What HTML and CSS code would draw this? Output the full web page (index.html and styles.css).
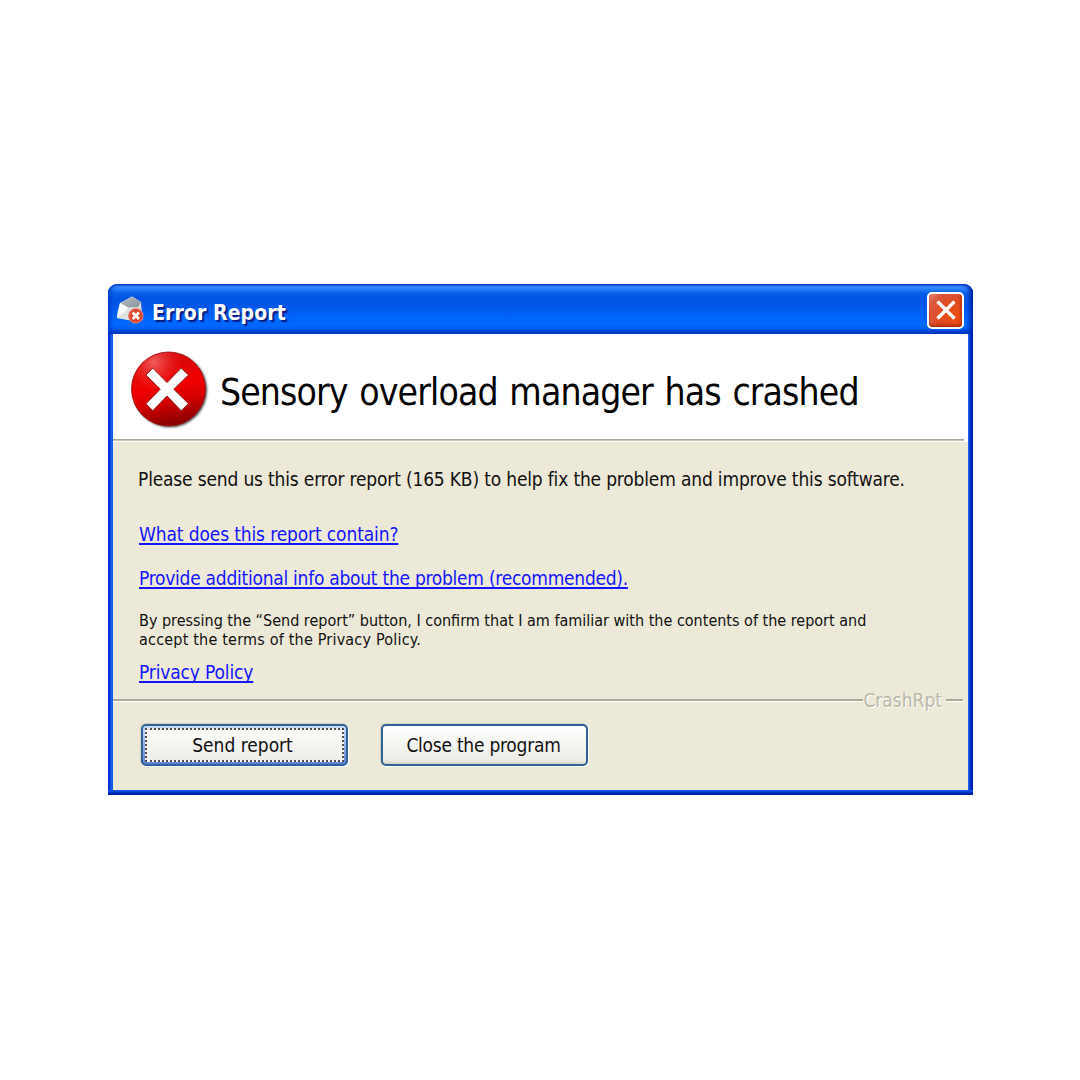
FILE: index.html
```html
<!DOCTYPE html>
<html lang="en">
<head>
<meta charset="utf-8">
<title>Error Report</title>
<link rel="stylesheet" href="styles.css">
</head>
<body>
<main class="window">
  <header class="titlebar">
    <svg class="app-icon" width="30" height="30" viewBox="0 0 30 30">
      <defs>
        <linearGradient id="paper" x1="0" y1="0" x2="0.4" y2="1"><stop offset="0" stop-color="#fff"/><stop offset="1" stop-color="#c9cdd0"/></linearGradient>
        <linearGradient id="flap" x1="0" y1="0" x2="1" y2="1"><stop offset="0" stop-color="#b9c3c8"/><stop offset="1" stop-color="#87939a"/></linearGradient>
      </defs>
      <path d="M4 9 16 2.500 25 8 26 21 18 27 1 24 1.500 18Z" fill="url(#paper)"/>
      <path d="M4 9 16 2.500 25 8 22 13 12 13.500Z" fill="url(#flap)"/>
      <path d="M4 9 1 24 10 17 12 13.500Z" fill="#f8fafa"/>
      <path d="M1 24 10 17 18 27Z" fill="#dfe2e3"/>
      <circle cx="19.800" cy="21.800" r="7.200" fill="#dc452c" stroke="#e98674" stroke-width="1"/>
      <path d="M16.600 18.600 23 25M23 18.600 16.600 25" stroke="#fff" stroke-width="2.800"/>
    </svg>
    <h1 class="caption">Error Report</h1>
    <button class="close" aria-label="Close">
      <svg width="20" height="20" viewBox="0 0 20 20"><path d="M1.500 1.500 18.500 18.500M18.500 1.500 1.500 18.500" stroke="#fff" stroke-width="3.400"/></svg>
    </button>
  </header>
  <section class="banner">
    <svg class="error-icon" width="80" height="80" viewBox="0 0 80 80">
      <defs>
        <linearGradient id="red" x1="0.400" y1="0" x2="0.600" y2="1"><stop offset="0" stop-color="#d00a0a"/><stop offset="0.450" stop-color="#f00000"/><stop offset="0.650" stop-color="#d80000"/><stop offset="1" stop-color="#800000"/></linearGradient>
        <radialGradient id="shine" cx="0.300" cy="0.140" r="0.400"><stop offset="0" stop-color="#ff8b8b" stop-opacity="0.650"/><stop offset="1" stop-color="#ff3030" stop-opacity="0"/></radialGradient>
        <filter id="soft" x="-10%" y="-10%" width="120%" height="120%"><feGaussianBlur stdDeviation="0.900"/></filter>
      </defs>
      <circle cx="40" cy="40.200" r="37" fill="#222" opacity="0.850" filter="url(#soft)"/>
      <circle cx="38.500" cy="39" r="37" fill="url(#red)" stroke="#9d1010" stroke-width="0.800"/>
      <circle cx="38.500" cy="39" r="36.500" fill="url(#shine)"/>
      <path d="M22.800 18.100 37 32.600 51.200 18.100 58.500 25 43.800 39.300 58.500 53.700 51.200 60.800 37 46 22.800 60.800 16 53.700 30.200 39.300 16 25Z" fill="#fff" stroke="#8c1010" stroke-width="0.900"/>
    </svg>
    <h2 class="headline">Sensory overload manager has crashed</h2>
  </section>
  <div class="banner-rule"></div>
  <section class="content">
    <p class="message">Please send us this error report (165 KB) to help fix the problem and improve this software.</p>
    <a class="link contain">What does this report contain?</a>
    <a class="link provide">Provide additional info about the problem (recommended).</a>
    <p class="terms">By pressing the “Send report” button, I confirm that I am familiar with the contents of the report and<br><span class="terms-end">accept the terms of the Privacy Policy.</span></p>
    <a class="link policy">Privacy Policy</a>
  </section>
  <div class="divider"><span class="line"></span><span class="brand">CrashRpt</span><span class="line short"></span></div>
  <footer class="actions">
    <button class="btn primary"><span class="focus">Send report</span></button>
    <button class="btn secondary">Close the program</button>
  </footer>
</main>
</body>
</html>
```

FILE: styles.css
```css
* { box-sizing: border-box; }
body {
  margin: 0;
  width: 1080px;
  height: 1080px;
  padding: 284px 0 0 108px;
  background: #fff;
  font-family: "DejaVu Sans Condensed", "DejaVu Sans", sans-serif;
  font-stretch: condensed;
  color: #111;
}
h1, h2, p { margin: 0; font-weight: normal; }
button { font: inherit; color: inherit; padding: 0; }
.window {
  width: 865px;
  height: 511px;
  padding: 0 5px 5px;
  display: flex;
  flex-direction: column;
  border-radius: 9px 9px 0 0;
  background:
    linear-gradient(#1858e8 0 1px, #0036cf 2px, #00159a 5px) bottom / 100% 5px no-repeat,
    linear-gradient(90deg, #0831d9 0 2px, #1663ee 3px, #0c59e6 5px) left / 5px 100% no-repeat,
    linear-gradient(90deg, #1c5be8 0 1px, #0038d0 2px, #00159a 5px) right / 5px 100% no-repeat,
    #ece9d8;
}
.titlebar {
  flex: none;
  height: 50px;
  margin: 0 -5px;
  padding: 3px 9px 0 8px;
  display: flex;
  align-items: center;
  border-radius: 9px 9px 0 0;
  background: linear-gradient(#0a50d8 0, #3c92ff 3px, #2a80fb 5px, #0860ea 9px, #0054e3 14px, #0057e8 22px, #0066fd 34px, #0068ff 42px, #0059ec 45px, #0042cc 48px, #003dc2 50px);
  box-shadow: inset 3px 0 4px -1px #0036c8, inset -4px 0 4px -1px #001fa4;
}
.app-icon { flex: none; margin-top: -3px; }
.caption {
  flex: 1;
  margin: 4px 0 0 6px;
  font-size: 21px;
  font-weight: bold;
  letter-spacing: 0.1px;
  line-height: 28px;
  color: #fff;
  text-shadow: 2px 2px 1px #0a1f86;
}
.close {
  width: 37px;
  height: 37px;
  margin-top: -1px;
  display: grid;
  place-items: center;
  border: 2px solid #fff;
  border-radius: 5px;
  background: radial-gradient(circle at 85% 75%, #ec4c12 0, #e24a1f 45%, #d9563c 75%, #e58573 100%);
  box-shadow: inset -1px -2px 3px #a92b08;
}
.banner {
  flex: none;
  height: 105px;
  padding: 16px 0 0 17px;
  display: flex;
  background: #fff;
  color: #000;
}
.headline {
  margin-left: 10px;
  padding-top: 19px;
  font-size: 37px;
  line-height: 48px;
  letter-spacing: -0.88px;
  word-spacing: 2px;
  white-space: nowrap;
}
.banner-rule { flex: none; height: 3px; background: linear-gradient(90deg, transparent calc(100% - 4px), #fff 0), linear-gradient(#aca899 0 1px, #c8c4b4 1px 2px, #fff 2px); }
.content {
  flex: none;
  height: 257px;
  padding: 25px 0 0 25px;
  display: flex;
  flex-direction: column;
  align-items: flex-start;
  white-space: nowrap;
}
.message, .link { font-size: 19px; line-height: 24px; }
.message { letter-spacing: -0.17px; }
.link { margin-left: 1px; color: #1414ff; text-decoration: underline; text-decoration-thickness: 1.500px; text-underline-offset: 2px; text-decoration-skip-ink: none; }
.contain { margin-top: 31px; letter-spacing: -0.13px; }
.provide { margin-top: 20px; letter-spacing: -0.26px; }
.terms { margin: 21px 0 0 1px; font-size: 16px; line-height: 19px; }
.terms-end { letter-spacing: 0.2px; }
.policy { margin-top: 11px; letter-spacing: -0.15px; }
.divider { flex: none; height: 2px; margin-right: 5px; display: flex; align-items: center; }
.line { flex: 1; height: 3px; background: linear-gradient(#aca899 0 2px, #fff 2px); }
.short { flex: none; width: 17px; margin-left: 4px; }
.brand { font-size: 19px; line-height: 24px; color: #bbb8a8; text-shadow: 1px 1px 0 #fff; }
.actions { display: flex; gap: 33px; padding: 23px 0 0 28px; }
.btn {
  width: 207px;
  height: 42px;
  border: 2px solid #2f6296;
  border-radius: 5px;
  background: linear-gradient(#fff, #f5f5f1 50%, #ecebe5 90%, #d8d4c8);
  box-shadow: 1px 1px 1px #fff, -1px -1px 1px #d5d0bd;
  font-size: 19px;
  white-space: nowrap;
}
.primary { padding: 2px; background: linear-gradient(#c5ddfb, #6284d8); }
.secondary { padding-right: 2px; letter-spacing: -0.25px; }
.focus { height: 100%; padding-right: 4px; display: grid; place-items: center; border: 2px dotted #564a52; background: linear-gradient(#fbfbf9, #eeeee9); }
```
